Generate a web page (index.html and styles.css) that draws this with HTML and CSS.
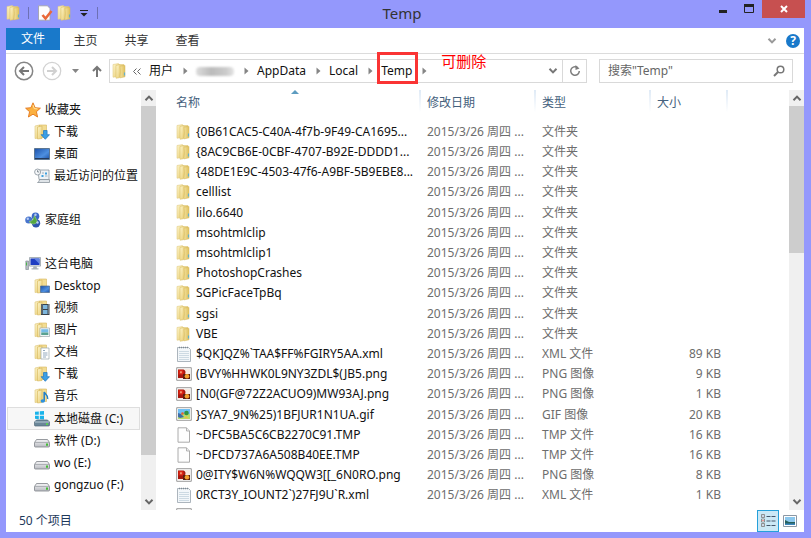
FILE: index.html
```html
<!DOCTYPE html>
<html lang="zh-CN">
<head>
<meta charset="utf-8">
<title>Temp</title>
<link rel="stylesheet" href="styles.css">
</head>
<body>
<svg class="defs" aria-hidden="true">
  <defs>
    <linearGradient id="gold" x1="0" x2="1" y1="0" y2="1"><stop offset="0" stop-color="#fdf5cc"/><stop offset="1" stop-color="#e9cd72"/></linearGradient>
    <linearGradient id="goldDark" x1="0" x2="1"><stop offset="0" stop-color="#f3e19c"/><stop offset="1" stop-color="#dfc05f"/></linearGradient>
    <linearGradient id="screen" x1="0" x2="1" y1="0" y2="1"><stop offset="0" stop-color="#1b4fa8"/><stop offset=".6" stop-color="#4d8fe0"/><stop offset="1" stop-color="#1c50a5"/></linearGradient>
    <linearGradient id="metal" x1="0" x2="0" y1="0" y2="1"><stop offset="0" stop-color="#f4f4f6"/><stop offset="1" stop-color="#b9bbc1"/></linearGradient>
    <symbol id="folder" viewBox="0 0 16 16">
      <path d="M1 1.500 6.500.6v12.800L1 14.200z" fill="url(#gold)" stroke="#e3cd84" stroke-width=".6"/>
      <path d="M6.500 1.500H12v12H6.500z" fill="url(#goldDark)" stroke="#dfc679" stroke-width=".5"/>
      <path d="M4 2.500 7.800 1.500Q8.500 8 7.500 14.700L4 15.200z" fill="url(#gold)" stroke="#dcc26c" stroke-width=".6"/>
      <path d="M8 3.200 13 2.400v11.400L8 14.900Q9 8 8 3.200z" fill="url(#goldDark)" stroke="#d6b95e" stroke-width=".5"/>
      <path d="M12.500 9.500v3" stroke="#63b0cb" stroke-width="1.200"/>
    </symbol>
    <symbol id="base" viewBox="0 0 16 16">
      <path d="M1 2 5.500 1v13L1 14.500z" fill="url(#gold)" stroke="#dcc376" stroke-width=".6"/>
      <path d="M5.500 1h7v12.500h-7z" fill="#f2dc93" stroke="#d6b75a" stroke-width=".6"/>
      <path d="M3.500 3 8 2v12.500L3.500 15z" fill="url(#gold)" stroke="#d6b75a" stroke-width=".6"/>
    </symbol>
    <symbol id="down" viewBox="0 0 16 16"><use href="#base"/><path d="M9.500 6.500h3.600v4.200h2.400l-4.200 4.600-4.200-4.600h2.400z" fill="#3b9fe6" stroke="#1b74bd" stroke-width=".7"/></symbol>
    <symbol id="fdesk" viewBox="0 0 16 16"><use href="#base"/><path d="M6.500 8h9v6.500h-9z" fill="url(#screen)" stroke="#526f92" stroke-width=".7"/></symbol>
    <symbol id="video" viewBox="0 0 16 16"><use href="#base"/><path d="M7 4h8.500v11H7z" fill="#39434c"/><path d="M9 5h4.500v4H9zM9 10h4.500v4H9z" fill="#7db6dc"/><path d="M8 4.500v10M14.600 4.500v10" stroke="#d8dde0" stroke-width=".8" stroke-dasharray="1 1"/></symbol>
    <symbol id="pics" viewBox="0 0 16 16"><use href="#base"/><path d="M6 6h9.500v8.500H6z" fill="#fff" stroke="#9aa6ad" stroke-width=".7"/><path d="M7.200 7.200h7.200v3.300H7.200z" fill="#75bce8"/><path d="M7.200 10.500h7.200v2.600H7.200z" fill="#58a191"/></symbol>
    <symbol id="docs" viewBox="0 0 16 16"><use href="#base"/><path d="M7 4h8v11H7z" fill="#fff" stroke="#9aa6ad" stroke-width=".7"/><path d="M9 6.500h2M9 9h4.500M9 11h4.500M9 13h3" stroke="#7994af" stroke-width=".8"/></symbol>
    <symbol id="music" viewBox="0 0 16 16"><use href="#base"/><path d="M10.200 13V4c.8 2.500 4.300 3 3.500 7" fill="none" stroke="#217fca" stroke-width="1.500"/><ellipse cx="8.800" cy="13" rx="2.200" ry="1.700" fill="#2e91dd"/></symbol>
    <symbol id="star" viewBox="0 0 16 16"><path d="m8 .8 2.100 4.900 5.300.5-4 3.500 1.200 5.300L8 12.200 3.400 15l1.200-5.300-4-3.500 5.300-.5z" fill="#fbb040" stroke="#e3771c" stroke-width=".9"/><path d="m8 3 1.200 3.600 3.300.3" fill="none" stroke="#ffe39c"/></symbol>
    <symbol id="desktop" viewBox="0 0 16 16"><path d="M.5 2.500h15v11H.5z" fill="url(#screen)" stroke="#5c7692"/><path d="M1 12h14v1H1z" fill="#23395c"/></symbol>
    <symbol id="recent" viewBox="0 0 16 16"><path d="M4 2h11v9.500H5z" fill="#eef2f5" stroke="#8b959d" stroke-width=".8"/><path d="M7 11.500h8.500v3H3.500q2-.5 2-3z" fill="#dfe4e8" stroke="#8b959d" stroke-width=".8"/><circle cx="3.600" cy="4" r="3" fill="#f6f8fa" stroke="#87929b" stroke-width=".8"/><path d="M3.600 2.200V4h1.500" fill="none" stroke="#54616c" stroke-width=".7"/><path d="M7.500 7h2v2h-2zM11 4.500h2v2h-2z" fill="#3fa0dd"/><path d="M11 8h2.500M8 5h2" stroke="#8fa0ad" stroke-width=".8"/></symbol>
    <symbol id="home" viewBox="0 0 16 16"><circle cx="10.500" cy="4.200" r="3.800" fill="#3c68c7"/><circle cx="3.800" cy="8" r="3.600" fill="#4874cd"/><circle cx="11" cy="11.200" r="4.200" fill="#2e54ad"/><path d="M4 9.500Q8.500 9.500 9.500 3.500l3 6.300Q8.500 14.500 4 9.500z" fill="#54a83f" stroke="#91cd7d" stroke-width=".7"/><circle cx="10.500" cy="2.800" r="1.200" fill="#b6cdf4"/><circle cx="2.800" cy="6.800" r="1.200" fill="#b6cdf4"/><circle cx="12.500" cy="10.500" r="1.200" fill="#b6cdf4"/></symbol>
    <symbol id="pc" viewBox="0 0 16 16"><path d="M.8 5h2.700v8.500H.8z" fill="#b7bdc3" stroke="#7b858e" stroke-width=".6"/><path d="M1.500 6.500v3" stroke="#47b647"/><path d="M4.500 1.500h11v8.600h-11z" fill="#e2e6ea" stroke="#8b959e" stroke-width=".7"/><path d="M5.500 2.500h9v6.500h-9z" fill="#1e3dc2"/><path d="m9 2.500 5.500 0V8z" fill="#6183e2"/><path d="M8.500 10.200h3l.5 2H8zM6.500 12.200h7v1.300h-7z" fill="#aab2b9"/></symbol>
    <symbol id="drive" viewBox="0 0 16 16"><path d="M2.500 6.500h11l2 3v3.700q0 .8-.8.800H1.300q-.8 0-.8-.8V9.500z" fill="url(#metal)" stroke="#7f8389" stroke-width=".8"/><path d="M1 9.500h14" stroke="#9a9da3" stroke-width=".7"/><path d="M12 10.400h2v2.400h-2z" fill="#43bc35"/></symbol>
    <symbol id="windrive" viewBox="0 0 16 16"><path d="M1 .8 4.800.4v3.400H1zM5.800.3 10 0v3.800H5.800zM1 4.800h3.800v3.400L1 7.800zM5.800 4.800H10v3.800l-4.200-.4z" fill="#19b3ea"/><path d="M2.500 9h11l2 2v3.200q0 .8-.8.800H1.300q-.8 0-.8-.8V11z" fill="#6b8799" stroke="#506879" stroke-width=".7"/><path d="M1 11h14" stroke="#b9cbd6"/><path d="M12 12.200h2v1.800h-2z" fill="#56d64b"/></symbol>
    <symbol id="xml" viewBox="0 0 16 16"><path d="M1.500 1.500h11L14.500 3.500v12h-13z" fill="#f3f7fa" stroke="#a3adb5" stroke-width=".9"/><path d="M3 1.500h9" stroke="#7f8b94" stroke-width="1.400" stroke-dasharray="1 1"/><path d="M3 5.500h10M3 7.500h10M3 9.500h10M3 11.500h10M3 13.500h10" stroke="#c3d2dd" stroke-width=".8"/></symbol>
    <symbol id="tmp" viewBox="0 0 16 16"><path d="M2 .8h8.500L13.500 4v11.200H2z" fill="#fdfdfd" stroke="#a3a3a3" stroke-width=".9"/><path d="M10.500.8V4h3" fill="#ececec" stroke="#a3a3a3" stroke-width=".8"/></symbol>
    <symbol id="png" viewBox="0 0 16 16"><path d="M.7 1.700h14.600v12.600H.7z" fill="#fff" stroke="#909090" stroke-width=".9"/><path d="M2 3h12v10H2z" fill="#f7e9df"/><path d="M2 3.500h5.500q3 1 1.500 5l-1 3.500H2z" fill="#a5170d"/><path d="M2.500 4h4q2 1.500.5 4.500H2.500z" fill="#dc2411"/><path d="M4.200 5.200h1.500v2H4.200z" fill="#f8b187"/><path d="M7 8h7v5H7z" fill="#5b1d0c"/><circle cx="11" cy="10.300" r="2.300" fill="#f3a02c"/></symbol>
    <symbol id="gif" viewBox="0 0 16 16"><path d="M.7 1.700h14.600v12.600H.7z" fill="#fff" stroke="#909090" stroke-width=".9"/><path d="M2 3h12v5.500H2z" fill="#6fc0f4"/><path d="M2 8h12v5H2z" fill="#b5dc6c"/><path d="m2 7 3 1 3 3-4 1-2-1z" fill="#3f6da8"/><circle cx="10.500" cy="7" r="2.300" fill="#31953f"/><circle cx="6.500" cy="7.500" r="1.300" fill="#e8632d"/><path d="m8 12 2-2 3 2.500z" fill="#f0c040"/></symbol>
    <symbol id="check" viewBox="0 0 16 16"><path d="M1.500.8h9L13 3.500v11.700H1.500z" fill="#fdfdfd" stroke="#a3a3ad" stroke-width=".9"/><path d="m5.500 10 3 3.500L14.500 6" fill="none" stroke="#e96839" stroke-width="2.600"/></symbol>
    <symbol id="chev" viewBox="0 0 10 8"><path d="m1.500 1.800 3.500 3.600L8.500 1.800" fill="none" stroke="currentColor" stroke-width="2"/></symbol>
    <symbol id="arrow" viewBox="0 0 5 8"><path d="m.5.500 4 3.500-4 3.500z" fill="#858585"/></symbol>
  </defs>
</svg>
<div class="window">
  <header class="titlebar">
    <div class="quick">
      <svg class="icon"><use href="#folder"/></svg>
      <i class="bar"></i>
      <button aria-label="属性"><svg class="icon"><use href="#check"/></svg></button>
      <button aria-label="新建文件夹"><svg class="icon"><use href="#folder"/></svg></button>
      <button class="customize" aria-label="自定义快速访问工具栏"><svg width="8" height="7" viewBox="0 0 8 7"><path d="M0 .5h8" stroke="#222"/><path d="M.5 3h7L4 6.500z" fill="#222"/></svg></button>
      <i class="bar"></i>
    </div>
    <h1>Temp</h1>
    <div class="controls">
      <button aria-label="最小化"><svg width="10" height="10"><path d="M1 7.500h8" stroke="#222" stroke-width="3"/></svg></button>
      <button aria-label="最大化"><svg width="10" height="10"><path d="M.5 1v7.500h9V1" fill="none" stroke="#222"/><path d="M0 1.500h10" stroke="#222" stroke-width="3"/></svg></button>
      <button class="close" aria-label="关闭"><svg width="8" height="8"><path d="m1 1 6 6M7 1 1 7" stroke="#fff" stroke-width="2"/></svg></button>
    </div>
  </header>
  <div class="frame">
    <nav class="ribbon">
      <button class="file">文件</button>
      <button>主页</button>
      <button>共享</button>
      <button>查看</button>
      <span class="ribbon-tools">
        <button aria-label="展开功能区"><svg class="gray" width="10" height="8"><use href="#chev"/></svg></button>
        <button class="help" aria-label="帮助">?</button>
      </span>
    </nav>
    <div class="toolbar">
      <div class="nav">
        <button aria-label="后退"><svg width="20" height="20"><circle cx="10" cy="10" r="8.700" fill="none" stroke="#858585" stroke-width="1.500"/><path d="M15 10H6m4-4-4 4 4 4" fill="none" stroke="#777" stroke-width="2"/></svg></button>
        <button aria-label="前进"><svg width="20" height="20"><circle cx="10" cy="10" r="8.700" fill="none" stroke="#d2d2d2" stroke-width="1.300"/><path d="M5 10h9m-4-4 4 4-4 4" fill="none" stroke="#d0d0d0" stroke-width="2"/></svg></button>
        <button aria-label="最近位置"><svg width="7" height="4"><path d="M0 0h7L3.500 4z" fill="#858585"/></svg></button>
        <button aria-label="向上"><svg width="10" height="12"><path d="M5 12V2M1 6l4-4 4 4" fill="none" stroke="#777" stroke-width="2"/></svg></button>
      </div>
      <div class="address">
        <svg class="icon"><use href="#folder"/></svg>
        <svg class="more" width="8" height="7"><path d="M3.500.5l-3 3 3 3M7.500.5l-3 3 3 3" fill="none" stroke="#666"/></svg>
        <a href="#">用户</a>
        <svg class="arrow"><use href="#arrow"/></svg>
        <span class="hidden-name"></span>
        <svg class="arrow"><use href="#arrow"/></svg>
        <a href="#">AppData</a>
        <svg class="arrow"><use href="#arrow"/></svg>
        <a href="#">Local</a>
        <svg class="arrow"><use href="#arrow"/></svg>
        <a href="#" class="marked">Temp<span class="note">可删除</span></a>
        <svg class="arrow"><use href="#arrow"/></svg>
        <span class="address-tools">
          <button aria-label="以前的位置"><svg width="10" height="8"><use href="#chev"/></svg></button>
          <button class="refresh" aria-label="刷新"><svg width="12" height="12"><path d="M8.500 2.500A4.300 4.300 0 1 0 10.300 6" fill="none" stroke="#7d7d7d" stroke-width="1.500"/><path d="M6.500 0v5l4-1.500z" fill="#7d7d7d"/></svg></button>
        </span>
      </div>
      <label class="search">
        <input type="text" placeholder='搜索"Temp"' aria-label="搜索">
        <svg width="12" height="12"><circle cx="7.500" cy="4.500" r="3.300" fill="none" stroke="#777" stroke-width="1.500"/><path d="m5 7-4 4" stroke="#777" stroke-width="2"/></svg>
      </label>
    </div>
    <main class="panes">
      <aside class="tree">
        <ul>
          <li class="root"><svg class="icon"><use href="#star"/></svg>收藏夹</li>
          <li><svg class="icon"><use href="#down"/></svg>下载</li>
          <li><svg class="icon"><use href="#desktop"/></svg>桌面</li>
          <li><svg class="icon"><use href="#recent"/></svg>最近访问的位置</li>
        </ul>
        <ul>
          <li class="root"><svg class="icon"><use href="#home"/></svg>家庭组</li>
        </ul>
        <ul>
          <li class="root"><svg class="icon"><use href="#pc"/></svg>这台电脑</li>
          <li><svg class="icon"><use href="#fdesk"/></svg>Desktop</li>
          <li><svg class="icon"><use href="#video"/></svg>视频</li>
          <li><svg class="icon"><use href="#pics"/></svg>图片</li>
          <li><svg class="icon"><use href="#docs"/></svg>文档</li>
          <li><svg class="icon"><use href="#down"/></svg>下载</li>
          <li><svg class="icon"><use href="#music"/></svg>音乐</li>
          <li class="selected"><svg class="icon"><use href="#windrive"/></svg>本地磁盘 (C:)</li>
          <li><svg class="icon"><use href="#drive"/></svg>软件 (D:)</li>
          <li><svg class="icon"><use href="#drive"/></svg>wo (E:)</li>
          <li><svg class="icon"><use href="#drive"/></svg>gongzuo (F:)</li>
        </ul>
      </aside>
      <div class="scroll tree-scroll">
        <button aria-label="向上滚动"><svg class="up" width="10" height="8"><use href="#chev"/></svg></button>
        <div class="track"><div class="thumb"></div></div>
        <button aria-label="向下滚动"><svg width="10" height="8"><use href="#chev"/></svg></button>
      </div>
      <section class="files">
        <table>
          <colgroup><col class="c-name"><col class="c-date"><col class="c-type"><col class="c-size"><col></colgroup>
          <thead><tr><th>名称<svg class="sort" width="8" height="4"><path d="M0 4h8L4 0z" fill="#5d9cc0"/></svg></th><th>修改日期</th><th>类型</th><th>大小</th><th></th></tr></thead>
          <tbody>
            <tr><td><svg class="icon"><use href="#folder"/></svg>{0B61CAC5-C40A-4f7b-9F49-CA1695...</td><td>2015/3/26 周四 ...</td><td>文件夹</td><td></td></tr>
            <tr><td><svg class="icon"><use href="#folder"/></svg>{8AC9CB6E-0CBF-4707-B92E-DDDD1...</td><td>2015/3/26 周四 ...</td><td>文件夹</td><td></td></tr>
            <tr><td><svg class="icon"><use href="#folder"/></svg>{48DE1E9C-4503-47f6-A9BF-5B9EBE8...</td><td>2015/3/26 周四 ...</td><td>文件夹</td><td></td></tr>
            <tr><td><svg class="icon"><use href="#folder"/></svg>celllist</td><td>2015/3/26 周四 ...</td><td>文件夹</td><td></td></tr>
            <tr><td><svg class="icon"><use href="#folder"/></svg>lilo.6640</td><td>2015/3/26 周四 ...</td><td>文件夹</td><td></td></tr>
            <tr><td><svg class="icon"><use href="#folder"/></svg>msohtmlclip</td><td>2015/3/26 周四 ...</td><td>文件夹</td><td></td></tr>
            <tr><td><svg class="icon"><use href="#folder"/></svg>msohtmlclip1</td><td>2015/3/26 周四 ...</td><td>文件夹</td><td></td></tr>
            <tr><td><svg class="icon"><use href="#folder"/></svg>PhotoshopCrashes</td><td>2015/3/26 周四 ...</td><td>文件夹</td><td></td></tr>
            <tr><td><svg class="icon"><use href="#folder"/></svg>SGPicFaceTpBq</td><td>2015/3/26 周四 ...</td><td>文件夹</td><td></td></tr>
            <tr><td><svg class="icon"><use href="#folder"/></svg>sgsi</td><td>2015/3/26 周四 ...</td><td>文件夹</td><td></td></tr>
            <tr><td><svg class="icon"><use href="#folder"/></svg>VBE</td><td>2015/3/26 周四 ...</td><td>文件夹</td><td></td></tr>
            <tr><td><svg class="icon"><use href="#xml"/></svg>$QK]QZ%`TAA$FF%FGIRY5AA.xml</td><td>2015/3/26 周四 ...</td><td>XML 文件</td><td>89 KB</td></tr>
            <tr><td><svg class="icon"><use href="#png"/></svg>(BVY%HHWK0L9NY3ZDL$(JB5.png</td><td>2015/3/26 周四 ...</td><td>PNG 图像</td><td>9 KB</td></tr>
            <tr><td><svg class="icon"><use href="#png"/></svg>[N0(GF@72Z2ACUO9)MW93AJ.png</td><td>2015/3/26 周四 ...</td><td>PNG 图像</td><td>1 KB</td></tr>
            <tr><td><svg class="icon"><use href="#gif"/></svg>}SYA7_9N%25)1BFJUR1N1UA.gif</td><td>2015/3/26 周四 ...</td><td>GIF 图像</td><td>20 KB</td></tr>
            <tr><td><svg class="icon"><use href="#tmp"/></svg>~DFC5BA5C6CB2270C91.TMP</td><td>2015/3/26 周四 ...</td><td>TMP 文件</td><td>16 KB</td></tr>
            <tr><td><svg class="icon"><use href="#tmp"/></svg>~DFCD737A6A508B40EE.TMP</td><td>2015/3/26 周四 ...</td><td>TMP 文件</td><td>16 KB</td></tr>
            <tr><td><svg class="icon"><use href="#png"/></svg>0@ITY$W6N%WQQW3[[_6N0RO.png</td><td>2015/3/26 周四 ...</td><td>PNG 图像</td><td>8 KB</td></tr>
            <tr><td><svg class="icon"><use href="#xml"/></svg>0RCT3Y_IOUNT2`)27FJ9U`R.xml</td><td>2015/3/26 周四 ...</td><td>XML 文件</td><td>1 KB</td></tr>
            <tr><td><svg class="icon"><use href="#png"/></svg></td><td></td><td></td><td></td></tr>
          </tbody>
        </table>
      </section>
      <div class="scroll files-scroll">
        <button aria-label="向上滚动"><svg class="up" width="10" height="8"><use href="#chev"/></svg></button>
        <div class="track"><div class="thumb"></div></div>
        <button aria-label="向下滚动"><svg width="10" height="8"><use href="#chev"/></svg></button>
      </div>
    </main>
    <footer class="status">
      <span>50 个项目</span>
      <div class="views">
        <button class="active" aria-label="详细信息"><svg width="16" height="14"><path d="M1.500.5h3v3h-3zM1.500 5h3v3h-3zM1.500 9.500h3v3h-3z" fill="#fff" stroke="#777" stroke-width=".8"/><path d="M2.500 6h1v1h-1z" fill="#d33"/><path d="M2.500 1.500h1v1h-1zM2.500 10.500h1v1h-1z" fill="#36a"/><path d="M6.500 2.500h4m1 0h4M6.500 7h4m1 0h4M6.500 11.500h4m1 0h4" stroke="#44566b"/></svg></button>
        <button aria-label="大缩略图"><svg width="14" height="12"><path d="M.5.500h13v11H.5z" fill="#fff" stroke="#8b98a5"/><path d="M2 2h10v8H2z" fill="#8cc8ee"/><path d="m2 5 4 2 6 0v3H2z" fill="#27605c"/><path d="M2 8.500h10V10H2z" fill="#3c87bd"/></svg></button>
      </div>
    </footer>
  </div>
</div>
</body>
</html>
```
FILE: styles.css
```css
* { box-sizing: border-box; }

body {
  margin: 0;
  background: #9498fc;
  color: #111;
  font: 12px/20px "Noto Sans", "Noto Sans CJK SC", sans-serif;
}

button {
  display: flex;
  align-items: center;
  justify-content: center;
  padding: 0;
  border: 0;
  background: none;
  color: inherit;
  font: inherit;
}

a { color: inherit; text-decoration: none; }
svg { flex: none; }

.defs { position: absolute; width: 0; height: 0; }
.icon { width: 16px; height: 16px; }

.window {
  display: flex;
  flex-direction: column;
  height: 100vh;
  padding: 0 7px 6px 6px;
}

/* Title bar */
.titlebar {
  display: grid;
  grid-template-columns: 1fr auto 1fr;
  height: 28px;
}

.quick { display: flex; align-items: center; height: 26px; }
.quick .bar { width: 1px; height: 12px; margin: 0 8px 0 6px; background: #6d70b4; }
.quick button { margin-right: 4px; }
.quick .customize { margin: 0 3px; }

h1 {
  margin: 0;
  padding-right: 6px;
  color: #333;
  font-size: 15px;
  font-weight: 400;
  line-height: 26px;
}

.controls { display: flex; justify-content: flex-end; margin-right: -1px; }
.controls button { width: 26px; height: 18px; }
.controls .close { width: 43px; background: #c75050; }

.frame {
  display: flex;
  flex: 1;
  flex-direction: column;
  min-height: 0;
  background: #fff;
}

/* Ribbon tabs */
.ribbon {
  display: flex;
  height: 26px;
  border-bottom: 1px solid #dcdcdc;
  color: #333;
}

.ribbon button { height: 26px; width: 51px; }
.ribbon .file { width: 54px; height: 22px; background: #1979ca; color: #fff; }
.ribbon-tools { display: flex; gap: 9px; align-items: center; margin-left: auto; padding-right: 4px; }
.ribbon-tools button { width: auto; }
.gray { color: #999; }

.ribbon-tools .help {
  width: 14px;
  height: 14px;
  border-radius: 50%;
  background: #1979ca;
  color: #fff;
  font-weight: 700;
}

/* Address row */
.toolbar { display: flex; height: 36px; padding: 5px 11px 7px 8px; }
.nav { display: flex; gap: 8px; width: 95px; align-items: center; }
.nav button:nth-child(3) { margin: 0 5px 0 2px; }

.address {
  display: flex;
  flex: 1;
  align-items: center;
  margin-right: 12px;
  padding-left: 2px;
  border: 1px solid #d9d9d9;
}

.address .more { margin: 0 8px 0 5px; }
.arrow { width: 5px; height: 8px; margin: 0 8px 0 10px; }

.hidden-name {
  width: 38px;
  height: 9px;
  border-radius: 4px;
  background: linear-gradient(90deg, #ddd, #bbb 40%, #ccc 80%, #e5e5e5);
  filter: blur(1px);
}

.marked { position: relative; }

.marked::after {
  content: "";
  position: absolute;
  inset: -9px -6px -3px -4px;
  border: 3px solid #fa3434;
}

.note {
  position: absolute;
  left: 60px;
  top: -10px;
  color: #f00;
  font-size: 15px;
  white-space: nowrap;
}

.address-tools { display: flex; align-self: stretch; margin-left: auto; color: #777; }
.address-tools button { width: 18px; }
.address-tools .refresh { width: 24px; border-left: 1px solid #d9d9d9; }

.search {
  display: flex;
  align-items: center;
  width: 194px;
  padding: 0 7px 0 8px;
  border: 1px solid #d9d9d9;
}

.search input {
  flex: 1;
  min-width: 0;
  padding: 0;
  border: 0;
  outline: 0;
  background: none;
  font: inherit;
}

.search input::placeholder { color: #666; }

/* Panes */
.panes { display: flex; flex: 1; min-height: 0; overflow: hidden; }

.tree { width: 135px; padding-top: 9px; overflow: hidden; white-space: nowrap; }
.tree ul { margin: 0 0 22px; padding: 0; list-style: none; }

.tree li {
  display: flex;
  gap: 4px;
  align-items: center;
  height: 22px;
  margin: 0 1px;
  padding-left: 27px;
}

.tree .root { padding-left: 18px; }

.tree .selected {
  height: 23px;
  padding-left: 26px;
  border: 1px solid #dedede;
  background: #f7f7f7;
}

.scroll { display: flex; flex-direction: column; width: 15px; background: #f0f0f0; color: #666; }
.scroll button { width: 15px; height: 16px; }
.track { flex: 1; }
.thumb { background: #cdcdcd; }
.tree-scroll .thumb { height: 90%; }
.files-scroll .thumb { height: 38%; }
.up { transform: rotate(180deg); }

.files { flex: 1; min-width: 0; margin-left: 14px; overflow: hidden; }

table { width: 100%; border-collapse: collapse; table-layout: fixed; white-space: nowrap; }
.c-name { width: 251px; }
.c-date, .c-type { width: 115px; }
.c-size { width: 77px; }

th {
  position: relative;
  height: 32px;
  padding: 3px 6px 9px;
  background: linear-gradient(#dfeaf6, #fff) right top / 2px 22px no-repeat;
  color: #44607c;
  font-weight: 400;
  text-align: left;
}

th:last-child { background: none; }
.sort { position: absolute; left: 121px; top: 0; }

td { height: 20px; padding: 0 6px; color: #6d6d6d; line-height: 20px; }
tr:nth-child(5n) td { height: 21px; }
td:first-child { color: #111; padding-right: 0; }
td:nth-child(4) { padding-right: 7px; text-align: right; }
td .icon { margin: -2px 4px 0 0; vertical-align: middle; }

/* Status bar */
.status {
  display: flex;
  justify-content: space-between;
  height: 22px;
  padding: 0 3px 0 13px;
  color: #1e395b;
  line-height: 22px;
}

.views { display: flex; }
.views button { width: 22px; height: 22px; }
.views .active { border: 1px solid #26a0da; background: #cbe8f6; }
```
